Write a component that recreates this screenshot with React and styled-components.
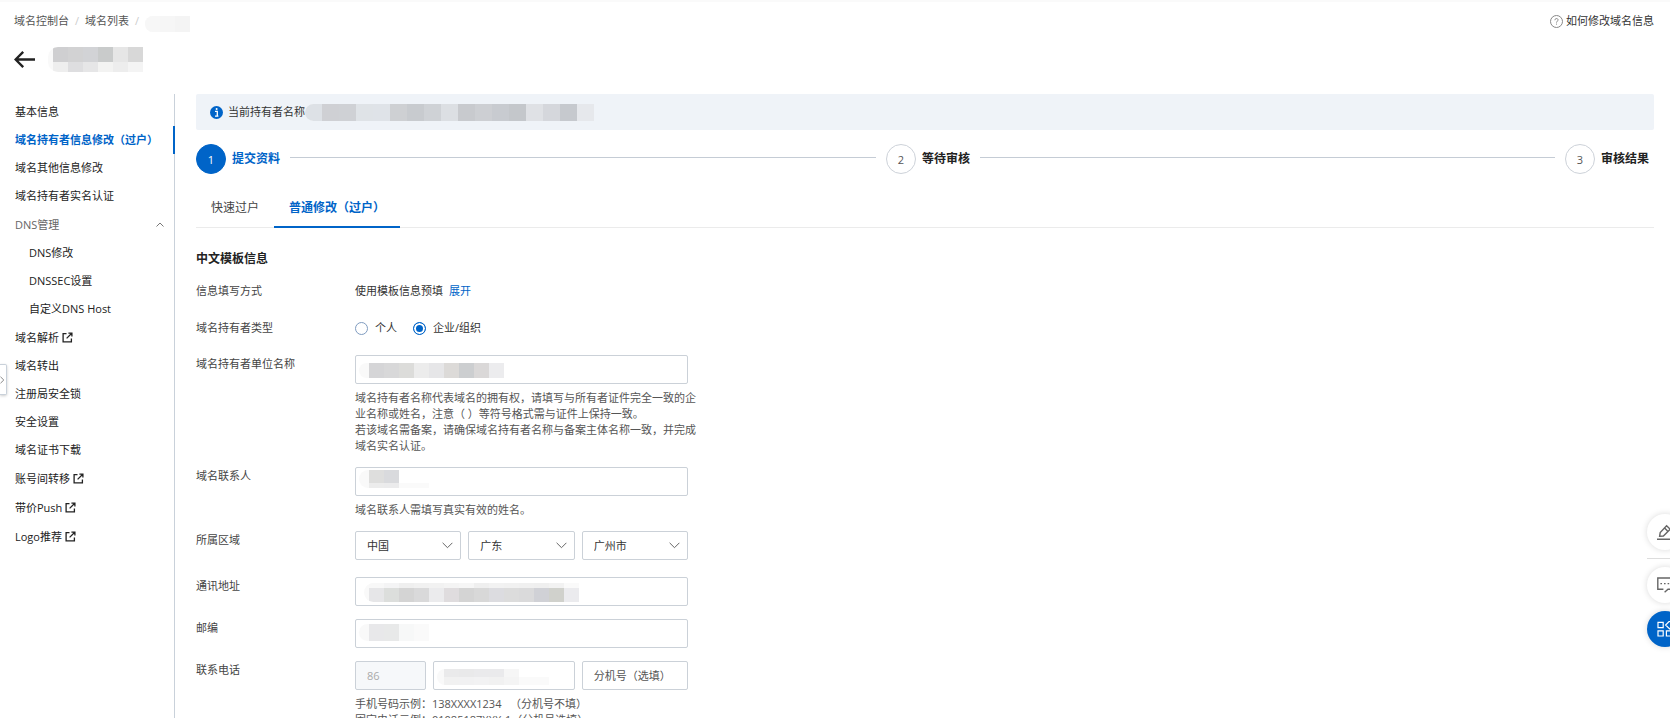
import React, { useState } from "react";
import styled, { createGlobalStyle, css } from "styled-components";

const menuTop = [
  { name: "基本信息" },
  { name: "域名持有者信息修改（过户）", active: true },
  { name: "域名其他信息修改" },
  { name: "域名持有者实名认证" },
];

const menuDns = ["DNS修改", "DNSSEC设置", "自定义DNS Host"];

const menuBottom = [
  { name: "域名解析", external: true },
  { name: "域名转出" },
  { name: "注册局安全锁" },
  { name: "安全设置" },
  { name: "域名证书下载" },
  { name: "账号间转移", external: true },
  { name: "带价Push", external: true },
  { name: "Logo推荐", external: true },
];

// colours of the blocks that cover private values
const masks = {
  crumb: [{ h: 16, colors: ["#f7f7f7", "#f6f6f6", "#f4f4f4"] }],
  title: [
    { h: 15, colors: ["#cfcfd1", "#d2d2d3", "#d2d3d6", "#c9cbcb", "#e6e6e6", "#d8d8d8"] },
    { h: 10, colors: ["#eeeeee", "#dedee0", "#e6e6e7", "#f3f3f2", "#ededed", "#f4f4f4"] },
  ],
  holder: [
    {
      h: 17,
      colors: [
        "#dde1e6", "#cfd0d4", "#cfd1d5", "#dfe3e7", "#dfe3e8", "#ced0d3",
        "#c8cbcf", "#cfd2d6", "#dcdfe3", "#c8cace", "#cdcfd3", "#c8cbd0",
        "#c4c7cb", "#dfe1e5", "#d5d7dc", "#c6c9ce", "#e6e8ec",
      ],
    },
  ],
  company: [
    {
      h: 15,
      colors: ["#d5d5d7", "#d8d8d9", "#dcdcda", "#ececec", "#e6e6e8", "#dcdad8", "#ccced0", "#dad8d8", "#ececee"],
    },
  ],
  contact: [
    { h: 13, colors: ["#dededd", "#d9dadd", "#ffffff", "#ffffff"] },
    { h: 5, colors: ["#ececec", "#ebebec", "#fafafa", "#fafafa"] },
  ],
  address: [
    {
      h: 5,
      colors: [
        "#f8f8f8", "#f4f4f5", "#efefef", "#f1f1f1", "#f2f2f2", "#f4f4f4", "#f6f6f6",
        "#efefef", "#f2f2f2", "#f1f1f1", "#f0f0f0", "#efefef", "#f2f2f2", "#fafafa",
      ],
    },
    {
      h: 14,
      colors: [
        "#e6e6e8", "#dcdedc", "#d4d4d4", "#d9d9da", "#ebebed", "#dfdcde", "#d4d4d4",
        "#d8d8d8", "#dcdce0", "#dcdcdc", "#dadadb", "#d0d1d6", "#d0d1cc", "#ebebee",
      ],
    },
  ],
  zip: [{ h: 17, colors: ["#e8e8ea", "#e8e9e9", "#f7f8f8", "#fafafa"] }],
  phone: [
    { h: 8, colors: ["#eaeaeb", "#e9e9ea", "#eaeaec", "#eaeaec", "#f6f6f6", "#ffffff", "#ffffff"] },
    { h: 8, colors: ["#f1f1f1", "#f1f1f2", "#f2f2f3", "#f1f1f1", "#f4f4f4", "#fafafa", "#fafafa"] },
  ],
};

const Mask = ({ rows, cell = 15, lead = 0, leadColor = "#f9f9f9" }) => (
  <MaskBox $lead={lead} $color={leadColor}>
    {rows.map((row, i) => (
      <MaskRow key={i}>
        {row.colors.map((color, j) => (
          <MaskCell key={j} $w={cell} $h={row.h} $color={color} />
        ))}
      </MaskRow>
    ))}
  </MaskBox>
);

const ExternalIcon = () => (
  <svg width="11" height="11" viewBox="0 0 11 11" fill="none" stroke="#222" strokeWidth="1.3">
    <path d="M4.5 1.6H1.1V9.9H9.4V6.6M6.4 1.1H9.9V4.6M9.8 1.2L4.6 6.4" />
  </svg>
);

const MenuItem = ({ item }) => (
  <li>
    <MenuLink href="#" $active={item.active} $external={item.external}>
      {item.name}
      {item.external && <ExternalIcon />}
    </MenuLink>
  </li>
);

const SelectBox = ({ label, value }) => (
  <SelectWrap>
    <Select aria-label={label} defaultValue={value}>
      <option>{value}</option>
    </Select>
    <SelectArrow width="11" height="7" viewBox="0 0 11 7" fill="none" stroke="#666">
      <path d="M0.6 0.8L5.5 5.7L10.4 0.8" />
    </SelectArrow>
  </SelectWrap>
);

const App = () => {
  const [tab, setTab] = useState("normal");
  const [type, setType] = useState("company");

  return (
    <Page>
      <GlobalStyle />
      <Header>
        <Crumbs aria-label="breadcrumb">
          <CrumbLink href="#">域名控制台</CrumbLink>
          <Slash>/</Slash>
          <CrumbLink href="#">域名列表</CrumbLink>
          <Slash>/</Slash>
          <CrumbMask>
            <Mask rows={masks.crumb} />
          </CrumbMask>
        </Crumbs>
        <HelpLink href="#">
          <svg width="13" height="13" viewBox="0 0 13 13" fill="none" stroke="#888">
            <circle cx="6.5" cy="6.5" r="6" />
            <path d="M4.9 5.2C4.9 3 8.1 3 8.1 5C8.1 6.2 6.5 6.2 6.5 7.6M6.5 8.6V9.6" />
          </svg>
          如何修改域名信息
        </HelpLink>
      </Header>

      <TitleBar>
        <BackButton type="button" aria-label="返回">
          <svg width="21" height="17" viewBox="0 0 21 17" fill="none" stroke="#222" strokeWidth="2.4">
            <path d="M1.4 8.5H21M9.2 0.9L1.6 8.5L9.2 16.1" />
          </svg>
        </BackButton>
        <Mask rows={masks.title} lead={5} />
      </TitleBar>

      <Body>
        <Sidebar>
          <MenuList>
            {menuTop.map((item) => (
              <MenuItem item={item} key={item.name} />
            ))}
            <li>
              <GroupButton type="button" aria-expanded="true">
                DNS管理
                <svg width="8" height="5" viewBox="0 0 8 5" fill="none" stroke="#777">
                  <path d="M0.5 4.5L4 1L7.5 4.5" />
                </svg>
              </GroupButton>
              <SubList>
                {menuDns.map((name) => (
                  <li key={name}>
                    <MenuLink href="#" $sub>
                      {name}
                    </MenuLink>
                  </li>
                ))}
              </SubList>
            </li>
            {menuBottom.map((item) => (
              <MenuItem item={item} key={item.name} />
            ))}
          </MenuList>
        </Sidebar>

        <Main>
          <Notice>
            <svg width="13" height="13" viewBox="0 0 13 13">
              <circle cx="6.5" cy="6.5" r="6.5" fill="#0064c8" />
              <path d="M5 5.4H7.3V10M5 10.2H8.4" fill="none" stroke="#fff" strokeWidth="1.3" />
              <circle cx="6.6" cy="3.1" r="1" fill="#fff" />
            </svg>
            <NoticeText>当前持有者名称</NoticeText>
            <Mask rows={masks.holder} cell={17} />
          </Notice>

          <Steps>
            <Step $grow={127} $active>
              <StepNum $active>1</StepNum>
              <StepName>提交资料</StepName>
              <StepLine />
            </Step>
            <Step $grow={125}>
              <StepNum>2</StepNum>
              <StepName>等待审核</StepName>
              <StepLine />
            </Step>
            <Step $grow={0}>
              <StepNum>3</StepNum>
              <StepName>审核结果</StepName>
            </Step>
          </Steps>

          <Tabs role="tablist">
            <Tab type="button" role="tab" aria-selected={tab === "fast"} $active={tab === "fast"} onClick={() => setTab("fast")}>
              快速过户
            </Tab>
            <Tab type="button" role="tab" aria-selected={tab === "normal"} $active={tab === "normal"} onClick={() => setTab("normal")}>
              普通修改（过户）
            </Tab>
          </Tabs>

          <SectionTitle>中文模板信息</SectionTitle>

          <Row $gap={19}>
            <Label as="span">信息填写方式</Label>
            <Line>
              使用模板信息预填
              <TextLink href="#">展开</TextLink>
            </Line>
          </Row>

          <Row $gap={18}>
            <Label as="span" id="type-label">域名持有者类型</Label>
            <Line role="radiogroup" aria-labelledby="type-label">
              <RadioLabel>
                <Radio name="type" checked={type === "person"} onChange={() => setType("person")} />
                个人
              </RadioLabel>
              <RadioLabel>
                <Radio name="type" checked={type === "company"} onChange={() => setType("company")} />
                企业/组织
              </RadioLabel>
            </Line>
          </Row>

          <Row>
            <Label htmlFor="company">域名持有者单位名称</Label>
            <div>
              <Field>
                <Input id="company" />
                <Cover $x={4} $y={8}>
                  <Mask rows={masks.company} lead={10} />
                </Cover>
              </Field>
              <Tips>
                域名持有者名称代表域名的拥有权，请填写与所有者证件完全一致的企
                <br />
                业名称或姓名，注意（ ）等符号格式需与证件上保持一致。
                <br />
                若该域名需备案，请确保域名持有者名称与备案主体名称一致，并完成
                <br />
                域名实名认证。
              </Tips>
            </div>
          </Row>

          <Row>
            <Label htmlFor="contact">域名联系人</Label>
            <div>
              <Field>
                <Input id="contact" />
                <Cover $x={4} $y={3}>
                  <Mask rows={masks.contact} lead={10} />
                </Cover>
              </Field>
              <Tips>域名联系人需填写真实有效的姓名。</Tips>
            </div>
          </Row>

          <Row $gap={17}>
            <Label as="span">所属区域</Label>
            <Group $cols="1fr 1fr 1fr">
              <SelectBox label="国家" value="中国" />
              <SelectBox label="省份" value="广东" />
              <SelectBox label="城市" value="广州市" />
            </Group>
          </Row>

          <Row>
            <Label htmlFor="address">通讯地址</Label>
            <Field>
              <Input id="address" />
              <Cover $x={9} $y={6}>
                <Mask rows={masks.address} lead={5} />
              </Cover>
            </Field>
          </Row>

          <Row>
            <Label htmlFor="zip">邮编</Label>
            <Field>
              <Input id="zip" />
              <Cover $x={4} $y={5}>
                <Mask rows={masks.zip} lead={10} />
              </Cover>
            </Field>
          </Row>

          <Row>
            <Label htmlFor="phone">联系电话</Label>
            <div>
              <Group $cols="2fr 4fr 3fr">
                <Input aria-label="国家代码" defaultValue="86" disabled />
                <Field>
                  <Input id="phone" />
                  <Cover $x={4} $y={8}>
                    <Mask rows={masks.phone} lead={7} />
                  </Cover>
                </Field>
                <Input aria-label="分机号" placeholder="分机号（选填）" />
              </Group>
              <Tips>
                手机号码示例：138XXXX1234 &nbsp;&nbsp;（分机号不填）
                <br />
                固定电话示例：01085187XXX-1（分机号选填）
              </Tips>
            </div>
          </Row>
        </Main>
      </Body>

      <Drawer type="button" aria-label="展开菜单">
        <svg width="5" height="8" viewBox="0 0 5 8" fill="none" stroke="#888">
          <path d="M0.5 0.8L3.8 4L0.5 7.2" />
        </svg>
      </Drawer>

      <Float>
        <FloatButton type="button" aria-label="反馈">
          <svg width="17" height="17" viewBox="0 0 17 17" fill="none" stroke="#666" strokeWidth="1.4">
            <path d="M0 15.3H17M2.6 12.3L3.2 8.6L9.6 1.8L13.2 5.2L6.4 12.1ZM7.6 4L11 7.4" />
          </svg>
        </FloatButton>
        <FloatRule />
        <FloatButton type="button" aria-label="咨询">
          <svg width="18" height="16" viewBox="0 0 18 16" fill="none" stroke="#666" strokeWidth="1.4">
            <path d="M6.4 12.3H0.8V1H17.2V12.3H11L7.6 15.2" />
            <path d="M3.4 6.6H5M7 6.6H8.6M10.6 6.6H12.2M14 6.6H15.4" />
          </svg>
        </FloatButton>
        <FloatButton type="button" aria-label="更多" $primary>
          <svg width="17" height="16" viewBox="0 0 17 16" fill="none" stroke="#fff" strokeWidth="1.2">
            <path d="M1 1.4H6.2V6.6H1ZM1 9.8H6.2V15H1ZM9.4 9.8H14.6V15H9.4ZM12.6 0L16.6 4L12.6 8L8.6 4Z" />
          </svg>
        </FloatButton>
      </Float>
    </Page>
  );
};

export default App;

const GlobalStyle = createGlobalStyle`
  * {
    box-sizing: border-box;
  }
  body {
    margin: 0;
    background: #fff;
    color: #333;
    font-size: 11px;
    line-height: 18px;
  }
  body, button, input, select {
    font-family: "Open Sans", "Noto Sans CJK SC", sans-serif;
  }
  ul {
    margin: 0;
    padding: 0;
    list-style: none;
  }
  a {
    text-decoration: none;
  }
  svg {
    flex: none;
  }
`;

const Page = styled.div`
  display: flex;
  flex-direction: column;
  height: 100vh;
  overflow: hidden;
`;
const Header = styled.header`
  display: flex;
  justify-content: space-between;
  padding: 10px 16px 0 14px;
  border-top: 2px solid #fafafa;
`;
const Crumbs = styled.nav`
  display: flex;
  gap: 6px;
`;
const CrumbLink = styled.a`
  color: #555;
`;
const Slash = styled.span`
  color: #ccc;
`;
const CrumbMask = styled.div`
  padding-top: 4px;
`;
const HelpLink = styled.a`
  display: flex;
  align-items: center;
  gap: 3px;
  height: 18px;
  color: #333;
`;
const TitleBar = styled.div`
  display: flex;
  align-items: center;
  gap: 13px;
  padding: 13px 14px 22px;
`;
const BackButton = styled.button`
  display: flex;
  padding: 0;
  border: 0;
  background: none;
`;

const MaskBox = styled.div`
  display: inline-block;
  flex: none;
  padding-left: ${(p) => p.$lead}px;
  border-radius: 10px 0 0 10px;
  background: ${(p) => p.$color};
  overflow: hidden;
  vertical-align: top;
`;
const MaskRow = styled.div`
  display: flex;
`;
const MaskCell = styled.span`
  width: ${(p) => p.$w}px;
  height: ${(p) => p.$h}px;
  background: ${(p) => p.$color};
`;

const Body = styled.div`
  display: flex;
  flex: 1;
  min-height: 0;
`;
const Sidebar = styled.aside`
  flex: none;
  width: 175px;
  padding-top: 4px;
  border-right: 1px solid #c9d1da;
`;
const MenuList = styled.ul`
  display: flex;
  flex-direction: column;
`;
const MenuLink = styled.a`
  display: flex;
  align-items: center;
  gap: 3px;
  height: ${(p) => (p.$external ? 29 : 28)}px;
  padding-left: ${(p) => (p.$sub ? 29 : 15)}px;
  color: #222;
  white-space: nowrap;
  ${(p) =>
    p.$active &&
    css`
      margin-right: -1px;
      color: #0064c8;
      font-weight: bold;
      border-right: 2px solid #0064c8;
    `}
`;
const GroupButton = styled.button`
  display: flex;
  align-items: center;
  justify-content: space-between;
  width: 100%;
  height: 28px;
  padding: 0 10px 0 15px;
  border: 0;
  background: none;
  color: #666;
  font-size: 11px;
`;
const SubList = styled.ul`
  padding-top: 1px;
`;

const Main = styled.main`
  flex: 1;
  min-width: 0;
  padding: 0 16px 0 21px;
`;
const Notice = styled.div`
  display: flex;
  align-items: center;
  height: 36px;
  padding-left: 14px;
  border-radius: 2px;
  background: #eff3f8;
`;
const NoticeText = styled.span`
  margin-left: 5px;
`;

const Steps = styled.div`
  display: flex;
  margin-top: 14px;
`;
const Step = styled.div`
  display: flex;
  align-items: center;
  flex: ${(p) => (p.$grow ? `${p.$grow} 1 0` : "none")};
  padding-right: ${(p) => (p.$grow ? 0 : 5)}px;
  color: ${(p) => (p.$active ? "#0064c8" : "#222")};
`;
const StepNum = styled.span`
  width: 30px;
  height: 30px;
  border: 1px solid ${(p) => (p.$active ? "#0064c8" : "#cdd2d9")};
  border-radius: 50%;
  background: ${(p) => (p.$active ? "#0064c8" : "#fff")};
  color: ${(p) => (p.$active ? "#fff" : "#555")};
  line-height: 30px;
  text-align: center;
`;
const StepName = styled.span`
  margin-left: 6px;
  font-size: 12px;
  font-weight: bold;
`;
const StepLine = styled.span`
  flex: 1;
  height: 1px;
  margin: 0 10px 4px;
  background: #c5ccd5;
`;

const Tabs = styled.div`
  display: flex;
  margin: 14px 0 22px;
  box-shadow: inset 0 -1px #ebebeb;
`;
const Tab = styled.button`
  height: 40px;
  padding: 0 15px;
  border: 0;
  border-bottom: 2px solid ${(p) => (p.$active ? "#0064c8" : "transparent")};
  background: none;
  color: ${(p) => (p.$active ? "#0064c8" : "#444")};
  font-size: 12px;
  font-weight: ${(p) => (p.$active ? "bold" : "normal")};
`;

const SectionTitle = styled.h2`
  margin: 0 0 14px;
  color: #222;
  font-size: 12px;
  line-height: 18px;
`;
const Row = styled.div`
  display: grid;
  grid-template-columns: 159px 333px;
  margin-bottom: ${(p) => p.$gap || 13}px;
`;
const Label = styled.label`
  color: #444;
`;
const Line = styled.div`
  display: flex;
  align-items: center;
  height: 18px;
`;
const TextLink = styled.a`
  margin-left: 6px;
  color: #0064c8;
`;
const RadioLabel = styled.label`
  display: flex;
  align-items: center;
  gap: 7px;
  margin-right: 16px;
`;
const Radio = styled.input.attrs({ type: "radio" })`
  appearance: none;
  width: 13px;
  height: 13px;
  margin: 0;
  border: 1px solid #7f9cc0;
  border-radius: 50%;
  &:checked {
    border-color: #0064c8;
    background: #0064c8;
    box-shadow: inset 0 0 0 2px #fff;
  }
`;
const Field = styled.div`
  position: relative;
`;
const Cover = styled.div`
  position: absolute;
  left: ${(p) => p.$x}px;
  top: ${(p) => p.$y}px;
  display: flex;
  pointer-events: none;
`;
const box = css`
  display: block;
  width: 100%;
  height: 29px;
  padding: 0 11px;
  border: 1px solid #cbd1d8;
  border-radius: 2px;
  background: #fff;
  color: #333;
  font-size: 11px;
`;
const Input = styled.input`
  ${box}
  &::placeholder {
    color: #555;
  }
  &:disabled {
    background: #f6f8fa;
    color: #aaa;
  }
`;
const SelectWrap = styled.div`
  position: relative;
`;
const Select = styled.select`
  ${box}
  appearance: none;
`;
const SelectArrow = styled.svg`
  position: absolute;
  top: 11px;
  right: 8px;
  pointer-events: none;
`;
const Group = styled.div`
  display: grid;
  grid-template-columns: ${(p) => p.$cols};
  gap: 7px;
`;
const Tips = styled.p`
  margin: 6px 0 0;
  color: #555;
  line-height: 16px;
  white-space: nowrap;
`;

const Drawer = styled.button`
  position: fixed;
  left: 0;
  top: 364px;
  display: flex;
  align-items: center;
  width: 7px;
  height: 31px;
  padding: 0;
  border: 1px solid #c9d1da;
  border-left: 0;
  border-radius: 0 2px 2px 0;
  background: #fff;
  box-shadow: 0 1px 3px rgba(0, 0, 0, 0.2);
`;
const Float = styled.div`
  position: fixed;
  right: -13px;
  bottom: 71px;
  display: flex;
  flex-direction: column;
  gap: 8px;
`;
const FloatButton = styled.button`
  display: flex;
  align-items: center;
  width: 36px;
  height: 36px;
  padding: 0 0 0 10px;
  border: 0;
  border-radius: 50%;
  background: ${(p) => (p.$primary ? "#0064c8" : "#fff")};
  box-shadow: 0 0 6px rgba(0, 0, 0, 0.15);
`;
const FloatRule = styled.span`
  height: 1px;
  background: #ddd;
`;
